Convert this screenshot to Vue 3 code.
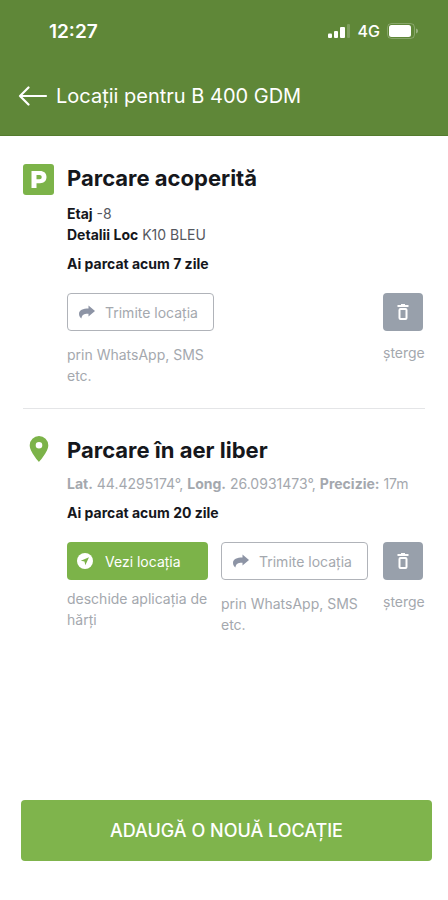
<script setup>
const locations = [
  {
    id: 1,
    kind: 'covered',
    title: 'Parcare acoperită',
    details: [
      { label: 'Etaj', value: '-8' },
      { label: 'Detalii Loc', value: 'K10 BLEU' },
    ],
    since: 'Ai parcat acum 7 zile',
  },
  {
    id: 2,
    kind: 'open',
    title: 'Parcare în aer liber',
    coords: { lat: '44.4295174°', long: '26.0931473°', precision: '17m' },
    since: 'Ai parcat acum 20 zile',
  },
]
</script>

<template>
  <div class="screen">
    <header class="top">
      <div class="status">
        <span class="time">12:27</span>
        <div class="indicators">
          <svg class="signal" viewBox="0 0 23 14" aria-hidden="true">
            <rect x="0" y="9.500" width="4" height="4.500" rx="1" />
            <rect x="6" y="7" width="4" height="7" rx="1" />
            <rect x="12" y="3" width="5" height="11" rx="1" />
            <rect x="19" y="0" width="3" height="14" rx="1" opacity="0.2" />
          </svg>
          <span class="network">4G</span>
          <svg class="battery" viewBox="0 0 32 16" aria-hidden="true">
            <rect x="0.5" y="0.5" width="27" height="15" rx="4" fill="none" stroke="#fff" stroke-opacity="0.25" />
            <rect x="2" y="2" width="22" height="12" rx="2.5" />
            <path d="M29 5.500c1.600.6 2 1.500 2 2.500s-.4 1.900-2 2.500z" opacity="0.35" />
          </svg>
        </div>
      </div>
      <div class="nav">
        <button class="back" type="button" aria-label="Înapoi">
          <svg viewBox="0 0 30 20" aria-hidden="true">
            <path d="M28 10H2M10.500 1.500L2 10l8.500 8.500" />
          </svg>
        </button>
        <h1>Locații pentru B 400 GDM</h1>
      </div>
    </header>

    <main class="list">
      <section v-for="item in locations" :key="item.id" class="location">
        <div class="marker">
          <svg v-if="item.kind === 'covered'" class="parking" viewBox="0 0 31 31" aria-hidden="true">
            <rect width="31" height="31" rx="3" fill="#7cb349" />
            <path fill="#fff" fill-rule="evenodd" d="M8.500 7H17c4 0 6.500 2.200 6.500 6s-2.500 6.200-6.500 6.200h-3.500V24h-5zM13.500 11v4.300h3c1.400 0 2.200-.8 2.200-2.200S17.900 11 16.500 11z" />
          </svg>
          <svg v-else class="pin" viewBox="0 0 20 26" aria-hidden="true">
            <path fill="#7cb349" fill-rule="evenodd" d="M10 0a9.300 9.300 0 0 0-9.300 9.300C.7 16 10 26 10 26s9.300-10 9.300-16.700A9.300 9.300 0 0 0 10 0zm0 12.500a3.300 3.300 0 1 1 0-6.600 3.300 3.300 0 0 1 0 6.600z" />
          </svg>
        </div>
        <div class="content">
          <h2>{{ item.title }}</h2>
          <div v-if="item.details" class="details">
            <p v-for="d in item.details" :key="d.label"><b>{{ d.label }}</b> {{ d.value }}</p>
          </div>
          <p v-if="item.coords" class="coords">
            <b>Lat.</b> {{ item.coords.lat }}, <b>Long.</b> {{ item.coords.long }}, <b>Precizie:</b> {{ item.coords.precision }}
          </p>
          <p class="since">{{ item.since }}</p>
          <div class="actions">
            <div v-if="item.kind === 'open'" class="action view">
              <button class="btn primary" type="button">
                <svg class="glyph" viewBox="0 0 16 16" aria-hidden="true">
                  <circle cx="8" cy="8" r="8" fill="#fff" />
                  <path d="M12 4.200L3.800 7.700l3.700.8.800 3.700z" fill="#7cb349" />
                </svg>
                <span>Vezi locația</span>
              </button>
              <p>deschide aplicația de hărți</p>
            </div>
            <div class="action share">
              <button class="btn outline" type="button">
                <svg class="glyph" viewBox="0 0 16 16" aria-hidden="true">
                  <path d="M9.500 1.500L16 7l-6.500 5.500V9.800C5.600 9.600 3 10.500 2.400 14.500 1.300 13.700 0 12.300 0 10 0 6 4 4.500 9.500 4.500z" fill="#8d94a5" />
                </svg>
                <span>Trimite locația</span>
              </button>
              <p>prin WhatsApp, SMS etc.</p>
            </div>
            <div class="action remove">
              <button class="btn grey" type="button" :aria-label="`șterge ${item.title}`">
                <svg class="trash" viewBox="0 0 12 16" aria-hidden="true">
                  <path d="M0.500 2h11M4 1h4" fill="none" stroke="#fff" stroke-width="2" />
                  <rect x="2.500" y="5" width="7" height="10" rx="1" fill="none" stroke="#fff" stroke-width="2" />
                </svg>
              </button>
              <p>șterge</p>
            </div>
          </div>
        </div>
      </section>
    </main>

    <footer class="bottom">
      <button class="add" type="button">ADAUGĂ O NOUĂ LOCAȚIE</button>
    </footer>
  </div>
</template>

<style>
body {
  margin: 0;
  background: #fff;
}
</style>

<style scoped>
.screen {
  min-height: 100vh;
  display: flex;
  flex-direction: column;
  font-family: Inter, "Liberation Sans", sans-serif;
  font-size: 14px;
  line-height: 21px;
  color: #15171c;
}
h1, h2, p {
  margin: 0;
}
button {
  font: inherit;
  cursor: pointer;
}
svg {
  display: block;
  flex: none;
}
.top {
  background: #5f8738;
  color: #fff;
  padding: 18px 0 24px;
  border-bottom: 1px solid #547b2e;
}
.status {
  display: flex;
  align-items: center;
  justify-content: space-between;
  padding: 0 29px 0 49px;
  height: 26px;
}
.time {
  font-size: 19px;
  font-weight: 600;
}
.indicators {
  display: flex;
  align-items: center;
  gap: 7px;
  fill: #fff;
}
.signal {
  width: 23px;
  height: 14px;
}
.network {
  font-size: 16px;
  font-weight: 500;
}
.battery {
  width: 32px;
  height: 16px;
}
.nav {
  display: flex;
  align-items: center;
  gap: 8px;
  padding: 0 18px;
  margin-top: 36px;
  height: 31px;
}
.back {
  padding: 0;
  border: 0;
  background: none;
}
.back svg {
  width: 30px;
  height: 20px;
  fill: none;
  stroke: #fff;
  stroke-width: 2.2;
  stroke-linecap: round;
  stroke-linejoin: round;
}
h1 {
  font-size: 20px;
  line-height: 30px;
  font-weight: 400;
}
.list {
  flex: 1;
  padding: 28px 23px 24px;
}
.location {
  display: grid;
  grid-template-columns: 31px minmax(0, 1fr);
  column-gap: 13px;
}
.location + .location {
  border-top: 1px solid #e4e5e7;
  margin-top: 22px;
  padding-top: 27px;
}
.marker {
  height: 31px;
  display: flex;
  justify-content: center;
  align-items: flex-start;
}
.parking {
  width: 31px;
  height: 31px;
}
.pin {
  width: 20px;
  height: 26px;
}
h2 {
  font-size: 22px;
  line-height: 28px;
  font-weight: 700;
}
.details {
  margin-top: 11px;
  color: #55585f;
}
.details b {
  color: #15171c;
}
b {
  font-weight: 700;
}
.coords {
  margin-top: 9px;
  color: #a4a8ae;
}
.since {
  margin-top: 8px;
  font-weight: 700;
}
.actions {
  display: flex;
  align-items: flex-start;
  gap: 13px;
  margin-top: 19px;
}
.action p {
  color: #a4a8ae;
}
.view {
  width: 141px;
}
.view p {
  margin-top: 8px;
  margin-right: -8px;
}
.share {
  width: 147px;
}
.share p {
  margin-top: 13px;
}
.remove {
  width: 42px;
  margin-left: auto;
}
.remove p {
  margin-top: 11px;
}
.btn {
  box-sizing: border-box;
  display: flex;
  align-items: center;
  gap: 10px;
  width: 100%;
  height: 38px;
  padding: 0 11px;
  border: 0;
  border-radius: 4px;
  white-space: nowrap;
}
.glyph {
  width: 16px;
  height: 16px;
}
.primary {
  background: #7cb349;
  color: #fff;
  padding: 0 10px;
  gap: 12px;
}
.outline {
  background: #fff;
  border: 1px solid #b0b3b9;
  color: #a4a8ae;
}
.grey {
  width: 40px;
  padding: 0;
  justify-content: center;
  background: #98a0ab;
}
.trash {
  width: 12px;
  height: 16px;
}
.bottom {
  padding: 0 16px 39px 21px;
}
.add {
  width: 100%;
  height: 61px;
  border: 0;
  border-radius: 4px;
  background: #7fb44c;
  color: #fff;
  font-size: 18px;
  font-weight: 500;
}
</style>
